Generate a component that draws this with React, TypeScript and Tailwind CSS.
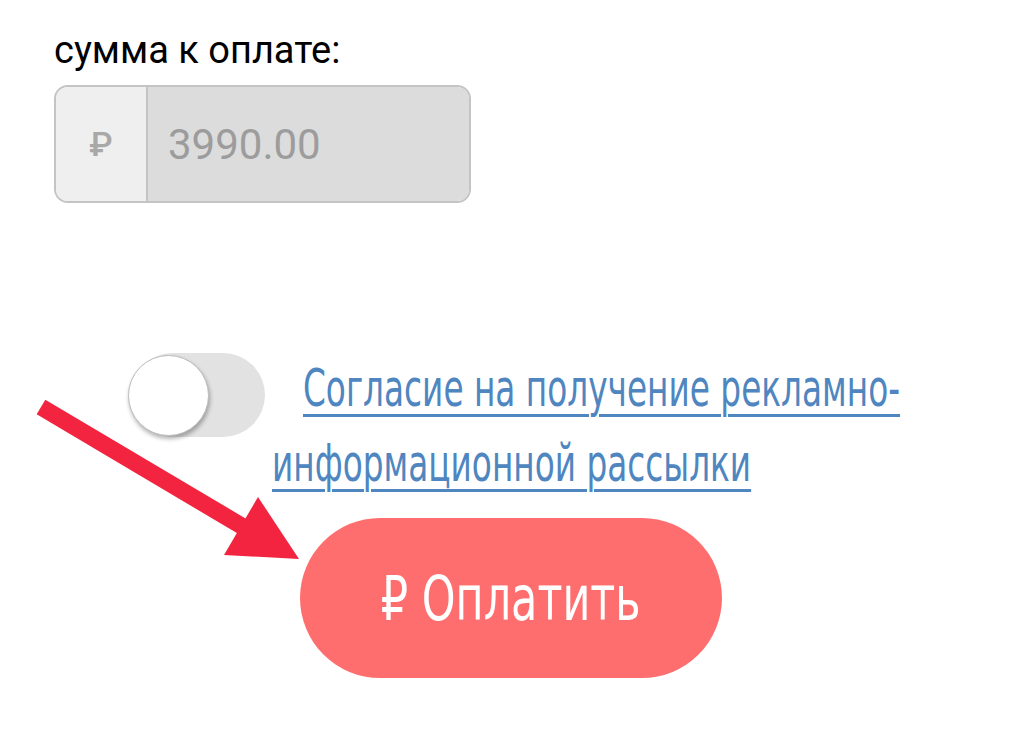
import React from "react";

export default function App() {
  const narrow = { fontFamily: '"DejaVu Sans Condensed", "DejaVu Sans", sans-serif' };
  return (
    <div className="relative w-[1024px] h-[752px] overflow-hidden bg-white" style={{ fontFamily: 'Roboto, "Noto Sans", sans-serif' }}>
      <div className="pl-[54px] pt-[28px]">
        <div className="text-[38px] leading-[44px] text-black" style={{ fontFamily: 'Roboto, sans-serif' }}>сумма к оплате:</div>
        <div className="mt-[13px] flex h-[118px] w-[417px] overflow-hidden rounded-[14px] border-2 border-[#c4c4c4]">
          <div className="flex w-[92px] items-center justify-center border-r-2 border-[#c4c4c4] bg-[#efefef] text-[34px] font-medium text-[#a8a8a8]">₽</div>
          <div className="flex flex-1 items-center bg-[#dcdcdc] pl-[20px] text-[42px] text-[#9c9c9c]">3990.00</div>
        </div>
      </div>

      <div className="mt-[148px] flex items-start">
        <div className="relative ml-[128px] mt-[2px] h-[84px] w-[137px] shrink-0">
          <div className="absolute right-0 top-0 h-[84px] w-[134px] rounded-full bg-[#e2e2e2]" />
          <div className="absolute left-0 top-[2px] h-[81px] w-[81px] rounded-full border border-[#bdbdbd] bg-white shadow-[1px_3px_4px_rgba(0,0,0,0.3)]" />
        </div>
        <div className="ml-[7px] flex flex-col text-[52px] leading-[75px] text-[#4f86bf] whitespace-nowrap" style={narrow}>
          <a className="ml-[31px] inline-block origin-left scale-x-[0.70] underline decoration-[3px] underline-offset-[8px]">Согласие на получение рекламно-</a>
          <a className="inline-block origin-left scale-x-[0.70] underline decoration-[3px] underline-offset-[8px]">информационной рассылки</a>
        </div>
      </div>

      <div className="ml-[300px] mt-[17px] flex h-[160px] w-[422px] items-center justify-center rounded-full bg-[#ff6e6f] text-white" style={narrow}>
        <span className="inline-block scale-x-[0.77] text-[62px]">₽ Оплатить</span>
      </div>

      <svg className="absolute left-0 top-0" width="1024" height="752" viewBox="0 0 1024 752">
        <line x1="41" y1="407" x2="245" y2="528" stroke="#f2243f" strokeWidth="17" />
        <polygon points="258,497 224,555 299,559" fill="#f2243f" />
      </svg>
    </div>
  );
}
